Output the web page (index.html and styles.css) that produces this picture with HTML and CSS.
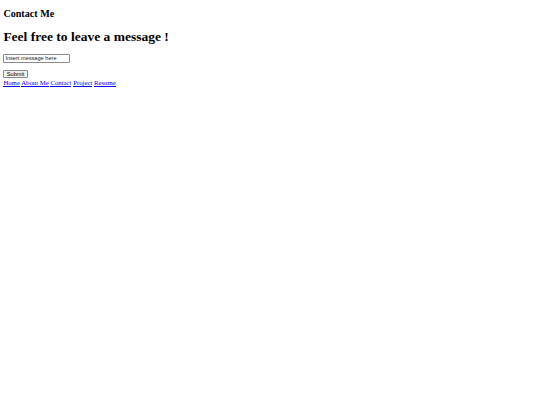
FILE: index.html
```html
<!DOCTYPE html>
<html>
<head>
<meta charset="utf-8">
<link rel="stylesheet" href="styles.css">
</head>
<body class="page">
<h2 class="title">Contact Me</h2>
<h1 class="headline">Feel free to leave a message !</h1>
<form class="form">
<input class="field" type="text" placeholder="Insert message here"><br><br>
<button class="submit" type="button">Submit</button>
</form>
<nav class="nav"><a class="link" href="#">Home</a> <a class="link" href="#">About Me</a> <a class="link" href="#">Contact</a> <a class="link" href="#">Project</a> <a class="link" href="#">Resume</a></nav>
</body>
</html>
```
FILE: styles.css
```css
.page {
  margin: 0 3.375px 3.375px;
  font-family: "Liberation Serif", serif;
  font-size: 6.75px;
  background: #fff;
  color: #000;
}
.title {
  font-size: 10.125px;
  margin: 8.4px 0 8.4px;
  font-weight: bold;
}
.headline {
  font-size: 13.5px;
  margin: 9.6px 0 9.05px;
  font-weight: bold;
}
.form {
  margin: 0;
  padding-bottom: 1px;
}
.field {
  box-sizing: border-box;
  font-family: "Liberation Sans", sans-serif;
  font-size: 5.625px;
  width: 66.5px;
  height: 8.6px;
  padding: 0 1px;
  border: 1px solid #8a8a8a;
  border-radius: 1px;
  margin: 0;
  vertical-align: bottom;
}
.field::placeholder {
  color: #222;
  opacity: 1;
}
.submit {
  box-sizing: border-box;
  font-family: "Liberation Sans", sans-serif;
  font-size: 5.625px;
  width: 24.4px;
  height: 8.4px;
  padding: 0;
  border: 1px solid #8a8a8a;
  border-radius: 1px;
  background: #efefef;
  margin: 0;
  color: #000;
  vertical-align: bottom;
}
.nav {
  line-height: 8px;
}
.link {
  color: #0000ee;
  text-decoration: none;
  border-bottom: 1px solid #0000ee;
}
```
